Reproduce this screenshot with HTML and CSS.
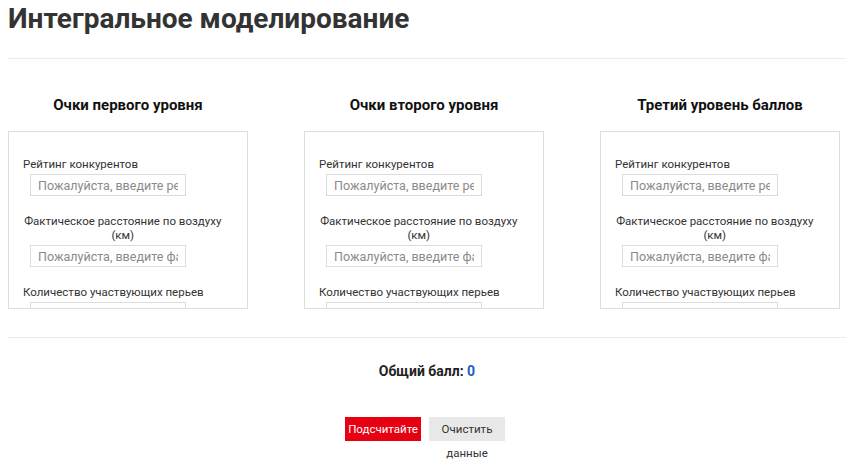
FILE: index.html
```html
<!DOCTYPE html>
<html lang="ru">
<head>
    <meta charset="UTF-8">
    <meta name="viewport" content="width=device-width, initial-scale=1.0">
    <title>Интегральное моделирование</title>
    <link rel="stylesheet" href="styles.css">
</head>
<body>
    <div class="page">
        <h1 class="page-title">Интегральное моделирование</h1>
        <hr class="divider">

        <div class="levels">
            <div class="level">
                <h3 class="level-title">Очки первого уровня</h3>
                <div class="level-card">
                    <div class="form-item">
                        <label>Рейтинг конкурентов</label>
                        <input type="text" placeholder="Пожалуйста, введите рейтинг">
                    </div>
                    <div class="form-item">
                        <label>Фактическое расстояние по воздуху (км)</label>
                        <input type="text" placeholder="Пожалуйста, введите фактическое расстояние">
                    </div>
                    <div class="form-item">
                        <label>Количество участвующих перьев</label>
                        <input type="text" placeholder="Пожалуйста, введите количество">
                    </div>
                </div>
            </div>

            <div class="level">
                <h3 class="level-title">Очки второго уровня</h3>
                <div class="level-card">
                    <div class="form-item">
                        <label>Рейтинг конкурентов</label>
                        <input type="text" placeholder="Пожалуйста, введите рейтинг">
                    </div>
                    <div class="form-item">
                        <label>Фактическое расстояние по воздуху (км)</label>
                        <input type="text" placeholder="Пожалуйста, введите фактическое расстояние">
                    </div>
                    <div class="form-item">
                        <label>Количество участвующих перьев</label>
                        <input type="text" placeholder="Пожалуйста, введите количество">
                    </div>
                </div>
            </div>

            <div class="level">
                <h3 class="level-title">Третий уровень баллов</h3>
                <div class="level-card">
                    <div class="form-item">
                        <label>Рейтинг конкурентов</label>
                        <input type="text" placeholder="Пожалуйста, введите рейтинг">
                    </div>
                    <div class="form-item">
                        <label>Фактическое расстояние по воздуху (км)</label>
                        <input type="text" placeholder="Пожалуйста, введите фактическое расстояние">
                    </div>
                    <div class="form-item">
                        <label>Количество участвующих перьев</label>
                        <input type="text" placeholder="Пожалуйста, введите количество">
                    </div>
                </div>
            </div>
        </div>

        <hr class="divider divider-bottom">

        <div class="total">Общий балл: <span id="total">0</span></div>

        <div class="actions">
            <a class="btn btn-calc" href="javascript:;" onclick="calculate()">Подсчитайте</a>
            <a class="btn btn-clear" href="javascript:;" onclick="clearAll()">Очистить данные</a>
        </div>
    </div>

    <script>
        const totalDisplay = document.getElementById('total');

        function calculate() {
            let sum = 0;
            document.querySelectorAll('.level-card input').forEach(function(input) {
                const value = parseFloat(input.value);
                if (!isNaN(value)) sum += value;
            });
            totalDisplay.textContent = sum;
        }

        function clearAll() {
            document.querySelectorAll('.level-card input').forEach(function(input) {
                input.value = '';
            });
            totalDisplay.textContent = '0';
        }
    </script>
</body>
</html>
```

FILE: styles.css
```css
* {
    margin: 0;
    padding: 0;
    box-sizing: border-box;
    font-family: Roboto, 'Liberation Sans', sans-serif;
}

body {
    background: #fff;
    color: #333;
}

.page {
    padding: 0 4px 40px 8px;
}

.page-title {
    font-size: 28px;
    line-height: 36px;
    padding-top: 1px;
    font-weight: bold;
    color: #333;
}

.divider {
    border: none;
    border-top: 1px solid #ebebeb;
    margin-top: 21px;
}

.divider-bottom {
    margin-top: 28px;
}

.levels {
    display: grid;
    grid-template-columns: repeat(3, 240px);
    column-gap: 56px;
    margin-top: 36px;
}

.level-title {
    text-align: center;
    font-size: 15px;
    line-height: 20px;
    color: #111;
    margin-bottom: 16px;
}

.level-card {
    height: 178px;
    overflow: hidden;
    border: 1px solid #dedede;
    padding: 25px 14px 0;
}

.form-item {
    margin-bottom: 18px;
}

.form-item label {
    display: block;
    width: fit-content;
    max-width: 199.5px;
    font-size: 11.5px;
    line-height: 14px;
    text-align: center;
    color: #333;
    margin-bottom: 3px;
}

.form-item input {
    display: block;
    width: 156px;
    height: 22px;
    margin-left: 7px;
    padding: 0 7px;
    border: 1px solid #dcdcdc;
    font-size: 12.5px;
    color: #333;
    outline: none;
}

.form-item input::placeholder {
    color: #8a8a8a;
}

.total {
    text-align: center;
    font-size: 14px;
    line-height: 20px;
    font-weight: bold;
    color: #222;
    margin-top: 23px;
}

.total span {
    color: #1f5fbf;
}

.actions {
    display: flex;
    justify-content: center;
    align-items: flex-start;
    gap: 8px;
    margin-top: 36px;
    padding-right: 4px;
}

.btn {
    display: block;
    width: 76px;
    height: 24px;
    line-height: 24px;
    font-size: 11.5px;
    text-align: center;
    text-decoration: none;
    cursor: pointer;
}

.btn-calc {
    background: #e60012;
    color: #fff;
}

.btn-clear {
    background: #e8e8e8;
    color: #333;
}
```
